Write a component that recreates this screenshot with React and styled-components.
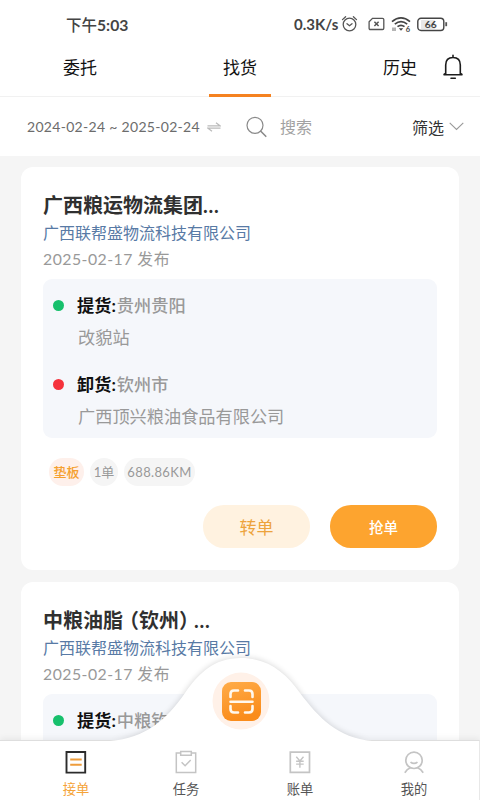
import React from "react";
import styled, { createGlobalStyle } from "styled-components";

const GlobalStyle = createGlobalStyle`
  * {
    box-sizing: border-box;
  }
  body {
    margin: 0;
    background-color: #f5f5f5;
    font-family: Lato, "Noto Sans CJK SC", sans-serif;
  }
  svg {
    display: block;
    flex-shrink: 0;
  }
`;

const Page = styled.div`
  position: relative;
  width: 480px;
  height: 800px;
  overflow: hidden;
  display: flex;
  flex-direction: column;
  background-color: #f5f5f5;
`;

const StatusBar = styled.div`
  height: 48px;
  padding: 0 32px 0 66px;
  display: flex;
  align-items: center;
  justify-content: space-between;
  background-color: white;
  color: #444;
  flex-shrink: 0;
`;

const Time = styled.span`
  font-size: 15.5px;
  font-weight: 500;
  b {
    font-size: 15.7px;
    font-weight: 700;
  }
`;

const StatusIcons = styled.div`
  display: flex;
  align-items: center;
`;

const Speed = styled.span`
  font-size: 15px;
  font-weight: 700;
  width: 44px;
  margin-right: 3px;
  white-space: nowrap;
`;

const Tabs = styled.div`
  height: 49px;
  flex-shrink: 0;
  display: grid;
  grid-template-columns: 160px 160px 119px 41px;
  border-bottom: 1px solid #f1f1f1;
  background-color: white;
`;

const Tab = styled.div`
  display: flex;
  justify-content: ${(props) => (props.$end ? "flex-end" : "center")};
  padding-right: ${(props) => (props.$end ? "22px" : "0")};
  color: #111;
  font-size: 17px;
  line-height: 40px;
  span {
    width: 62px;
    height: 49px;
    text-align: center;
    border-bottom: 3px solid ${(props) => (props.$active ? "#f58220" : "transparent")};
    ${(props) => props.$end && "width: auto;"}
  }
`;

const BellSlot = styled.div`
  padding: 6px 0 0 3px;
`;

const FilterBar = styled.div`
  height: 59px;
  flex-shrink: 0;
  display: flex;
  align-items: center;
  padding: 0 16px 0 27px;
  background-color: white;
`;

const DateRange = styled.div`
  width: 180px;
  font-size: 14px;
  letter-spacing: 0.3px;
  color: #6c6c6c;
  white-space: nowrap;
`;

const Search = styled.div`
  flex: 1;
  display: flex;
  align-items: center;
  gap: 13px;
  padding-left: 25px;
  font-size: 16px;
  line-height: 22px;
  color: #a2a2a2;
`;

const Filter = styled.div`
  display: flex;
  align-items: center;
  gap: 5px;
  font-size: 16px;
  color: #333;
`;

const List = styled.div`
  flex: 1;
  min-height: 0;
  overflow: hidden;
  display: flex;
  flex-direction: column;
  gap: 12px;
  padding: 11px 21px 0;
`;

const Card = styled.div`
  height: 403px;
  flex-shrink: 0;
  padding: 24px 22px 0;
  border-radius: 12px;
  background-color: white;
`;

const Title = styled.h2`
  margin: 0;
  font-size: 20px;
  line-height: 28px;
  font-weight: 700;
  color: #303030;
  font-feature-settings: "halt" ${(props) => (props.$tight ? 1 : 0)};
`;

const Paren = styled.span`
  margin: ${(props) => (props.$open ? "0 0 0 6px" : "0 5px 0 0")};
`;

const Dots = styled.span`
  letter-spacing: 0.8px;
`;

const Company = styled.div`
  font-size: 16px;
  line-height: 28px;
  color: #587aa5;
`;

const Published = styled.div`
  font-size: 15.8px;
  line-height: 24px;
  letter-spacing: 0.48px;
  color: #999;
`;

const Route = styled.div`
  height: 159px;
  margin-top: 8px;
  padding: 11px 10px 0;
  border-radius: 9px;
  background-color: #f5f7fb;
`;

const Stop = styled.div`
  display: grid;
  grid-template-columns: 25px 1fr;
  align-items: center;
  height: 79px;
  grid-template-rows: 31px 32px;
  font-size: 17.2px;
  line-height: 31px;
  color: #999;
  white-space: nowrap;
`;

const Dot = styled.i`
  width: 11px;
  height: 11px;
  border-radius: 50%;
  background-color: ${(props) => props.$color};
`;

const Place = styled.div`
  font-weight: 500;
  margin-left: -1px;
  b {
    color: #111;
    font-weight: 700;
    margin-right: 1px;
  }
`;

const Address = styled.div`
  grid-column: 2;
`;

const Tags = styled.div`
  display: flex;
  gap: 6px;
  margin: 20px 0 0 6px;
`;

const Tag = styled.span`
  height: 28px;
  width: ${(props) => props.$width}px;
  border-radius: 14px;
  text-align: center;
  font-size: 13px;
  font-weight: ${(props) => (props.$hot ? 500 : 400)};
  line-height: 28px;
  letter-spacing: ${(props) => props.$spacing || 0}px;
  color: ${(props) => (props.$hot ? "#f5a02f" : "#999")};
  background-color: ${(props) => (props.$hot ? "#fef0eb" : "#f5f5f5")};
`;

const Actions = styled.div`
  display: flex;
  justify-content: flex-end;
  gap: 20px;
  margin-top: 19px;
`;

const Button = styled.button`
  width: 107px;
  height: 43px;
  padding: 0;
  border: none;
  border-radius: 21px;
  font-family: inherit;
  font-size: ${(props) => (props.$primary ? "14.5px" : "17px")};
  font-weight: ${(props) => (props.$primary ? 500 : 400)};
  color: ${(props) => (props.$primary ? "white" : "#eda33c")};
  background-color: ${(props) => (props.$primary ? "#fda42f" : "#fff2e0")};
`;

const BottomNav = styled.div`
  height: 60px;
  flex-shrink: 0;
  display: grid;
  grid-template-columns: 110px 110px 118px 110px;
  padding-left: 21px;
  border-top: 1px solid #dedede;
  border-right: 1px solid #e8e8e8;
  background-color: white;
  box-shadow: 0 -2px 6px rgba(0, 0, 0, 0.06);
`;

const NavItem = styled.div`
  display: flex;
  flex-direction: column;
  align-items: center;
  gap: 5px;
  padding-top: 9px;
  font-size: 13.3px;
  line-height: 20px;
  color: ${(props) => (props.$active ? "#f5a338" : "#555")};
`;

// raised hump behind the scan button, floats over the list
const ScanHump = styled.div`
  position: absolute;
  left: 100px;
  top: 646px;
`;

const Alarm = () => (
  <svg width="17" height="18" viewBox="0 0 17 18" fill="none" stroke="#555" strokeWidth="1.3" strokeLinecap="round">
    <circle cx="8.5" cy="9.5" r="6.3" />
    <path d="M6 8.7l2.5 2 2.5-2M1.5 4.6L4.6 1.7M15.5 4.6l-3.1-2.9" />
  </svg>
);

const NoSim = () => (
  <svg width="17" height="14" viewBox="0 0 17 14" fill="none" stroke="#555" strokeWidth="1.3">
    <path d="M4.5 1.3H14.5Q15.8 1.3 15.8 2.6V11.2Q15.8 12.5 14.5 12.5H2.4Q1.1 12.5 1.1 11.2V4.7z" />
    <path d="M6.4 4.8l4.2 4.2M10.6 4.8L6.4 9" strokeWidth="1.5" />
  </svg>
);

const Wifi = () => (
  <svg width="20" height="17" viewBox="0 0 20 17" fill="none" stroke="#444" strokeWidth="1.7">
    <path d="M1 5.6Q10-1.8 19 5.6M3.8 8.2Q10 3.2 16.2 8.2M6.5 10.7Q10 8 13.5 10.7" />
    <path d="M7.8 12.2h4.4L10 14.7z" fill="#444" stroke="none" />
    <path d="M2 11.5v3.5M4 11.5v3.5" strokeWidth="0.8" />
    <text x="14.7" y="15.8" fontSize="7.5" fontWeight="700" fill="#444" stroke="none">6</text>
  </svg>
);

const Battery = () => (
  <svg width="31" height="15" viewBox="0 0 31 15">
    <rect x="4" y="3" width="14" height="9" fill="#e8e8e8" />
    <rect x="0.8" y="1.3" width="26" height="12.2" rx="3.2" fill="none" stroke="#444" strokeWidth="1.4" />
    <path d="M29.2 5.2v4" stroke="#555" strokeWidth="1.8" />
    <text x="13.8" y="11.2" textAnchor="middle" fontSize="10.3" fontWeight="700" fill="#444">66</text>
  </svg>
);

const Bell = () => (
  <svg width="22" height="26" viewBox="0 0 22 26" fill="none" stroke="#1c1c1c" strokeWidth="1.6" strokeLinecap="round">
    <path d="M3.7 20V11Q3.7 3.5 11 3.5T18.3 11V20M2 20.7Q2 19.7 3.5 19.5M20 20.7Q20 19.7 18.5 19.5M2 20.8H20M9 24.3H13.3M11 1.3V3" />
  </svg>
);

const Swap = () => (
  <svg width="14" height="10" viewBox="0 0 14 10" fill="none" stroke="#bbb" strokeWidth="1.3">
    <path d="M0.5 3.8H13L9 0.7M13.5 6.2H1L5 9.3" />
  </svg>
);

const Magnifier = () => (
  <svg width="21" height="22" viewBox="0 0 21 22" fill="none" stroke="#8a8a8a" strokeWidth="1.2" strokeLinecap="round">
    <circle cx="9" cy="9.3" r="8" />
    <path d="M14.8 15.3l5 5" strokeWidth="1.6" />
  </svg>
);

const Chevron = () => (
  <svg width="15" height="9" viewBox="0 0 15 9" fill="none" stroke="#999" strokeWidth="1.1">
    <path d="M0.7 0.8l6.8 6.7 6.8-6.7" />
  </svg>
);

const OrdersIcon = () => (
  <svg width="22" height="24" viewBox="0 0 22 24" fill="none" strokeWidth="1.9">
    <path d="M1.5 2H20.2V22.6H1.5z" stroke="#2c2c2c" />
    <path d="M5.2 9.5H16.7M5.2 14.7H16.7" stroke="#ee9d3c" />
  </svg>
);

const TasksIcon = () => (
  <svg width="22" height="24" viewBox="0 0 22 24" fill="none" stroke="#c4c4c4" strokeWidth="1.5">
    <path d="M5.5 3H1.3V22.6H20.7V3H16.5M5.7 1.5H16.3V5.3H5.7z" />
    <path d="M6.6 12.3l3.5 3.5 5.6-5.8" />
  </svg>
);

const BillsIcon = () => (
  <svg width="22" height="24" viewBox="0 0 22 24" fill="none" stroke="#c4c4c4" strokeWidth="1.7">
    <path d="M1.3 2.2H20.5V22.3H1.3z" />
    <path d="M7.3 6.8l3.6 4.1 3.6-4.1M10.9 10.9V17.7M7.1 11.2h7.6M7.1 14.1h7.6" strokeWidth="1.4" />
  </svg>
);

const MeIcon = () => (
  <svg width="22" height="24" viewBox="0 0 22 24" fill="none" stroke="#c4c4c4" strokeWidth="1.7">
    <circle cx="11" cy="10.3" r="8.2" />
    <path d="M7.5 12.1Q11 14.8 14.5 12.1M1.8 22.8Q4 19 7.4 17.8M20.2 22.8Q18 19 14.6 17.8" />
  </svg>
);

const HumpDrawing = () => (
  <svg width="280" height="96" viewBox="0 0 280 96">
    <defs>
      <linearGradient id="scan" x1="0" y1="0" x2="0.3" y2="1">
        <stop offset="0" stopColor="#ffac49" />
        <stop offset="1" stopColor="#fa8c1b" />
      </linearGradient>
      <filter id="soft" x="-5%" y="-15%" width="110%" height="130%">
        <feGaussianBlur stdDeviation="3" />
      </filter>
    </defs>
    <path
      d="M10 94C46 92 66 74 85 47C99 27 114 12 141 12C168 12 186 27 200 47C219 72 238 92 272 94z"
      fill="#000"
      opacity="0.17"
      filter="url(#soft)"
    />
    <path d="M10 95C46 92 66 74 85 47C99 27 114 12 141 12C168 12 186 27 200 47C219 72 238 92 272 95V96H10z" fill="white" />
    <circle cx="141" cy="55" r="28.5" fill="#fff1e8" />
    <rect x="122" y="36" width="39" height="39" rx="9" fill="url(#scan)" />
    <g fill="none" stroke="#fff8ee" strokeWidth="2.6" strokeLinecap="round">
      <path d="M138 44.5H134Q130.5 44.5 130.5 48V51M145 44.5H149Q152.5 44.5 152.5 48V51M138 66.5H134Q130.5 66.5 130.5 63V60M145 66.5H149Q152.5 66.5 152.5 63V60M130.5 55.7H152.5" />
    </g>
  </svg>
);

const orders = [
  {
    id: 1,
    title: "广西粮运物流集团",
    from: "贵州贵阳",
    fromAddress: "改貌站",
    to: "钦州市",
    toAddress: "广西顶兴粮油食品有限公司",
    full: true,
  },
  { id: 2, title: "中粮油脂", city: "钦州", from: "中粮钦" },
];

const OrderCard = ({ order }) => (
  <Card>
    <Title $tight={order.city}>
      {order.title}
      {order.city && (
        <>
          <Paren $open>（</Paren>{order.city}<Paren>）</Paren>
        </>
      )}
      <Dots>...</Dots>
    </Title>
    <Company>广西联帮盛物流科技有限公司</Company>
    <Published>2025-02-17 发布</Published>
    <Route>
      <Stop>
        <Dot $color="#17c06c" />
        <Place><b>提货:</b>{order.from}</Place>
        <Address>{order.fromAddress}</Address>
      </Stop>
      {order.full && (
        <Stop>
          <Dot $color="#f5323c" />
          <Place><b>卸货:</b>{order.to}</Place>
          <Address>{order.toAddress}</Address>
        </Stop>
      )}
    </Route>
    {order.full && (
      <>
        <Tags>
          <Tag $hot $width={35}>垫板</Tag>
          <Tag $width={28}>1单</Tag>
          <Tag $width={71} $spacing={0.35}>688.86KM</Tag>
        </Tags>
        <Actions>
          <Button>转单</Button>
          <Button $primary>抢单</Button>
        </Actions>
      </>
    )}
  </Card>
);

const App = () => {
  return (
    <Page>
      <GlobalStyle />
      <StatusBar>
        <Time>下午<b>5:03</b></Time>
        <StatusIcons>
          <Speed>0.3K/s</Speed>
          <Alarm />
          <span style={{ width: 10 }} />
          <NoSim />
          <span style={{ width: 6 }} />
          <Wifi />
          <span style={{ width: 6 }} />
          <Battery />
        </StatusIcons>
      </StatusBar>
      <Tabs>
        <Tab><span>委托</span></Tab>
        <Tab $active><span>找货</span></Tab>
        <Tab $end><span>历史</span></Tab>
        <BellSlot><Bell /></BellSlot>
      </Tabs>
      <FilterBar>
        <DateRange>2024-02-24 ~ 2025-02-24</DateRange>
        <Swap />
        <Search><Magnifier />搜索</Search>
        <Filter>筛选<Chevron /></Filter>
      </FilterBar>
      <List>
        {orders.map((order) => (
          <OrderCard key={order.id} order={order} />
        ))}
      </List>
      <BottomNav>
        <NavItem $active><OrdersIcon />接单</NavItem>
        <NavItem><TasksIcon />任务</NavItem>
        <NavItem><BillsIcon />账单</NavItem>
        <NavItem><MeIcon />我的</NavItem>
      </BottomNav>
      <ScanHump><HumpDrawing /></ScanHump>
    </Page>
  );
};

export default App;
